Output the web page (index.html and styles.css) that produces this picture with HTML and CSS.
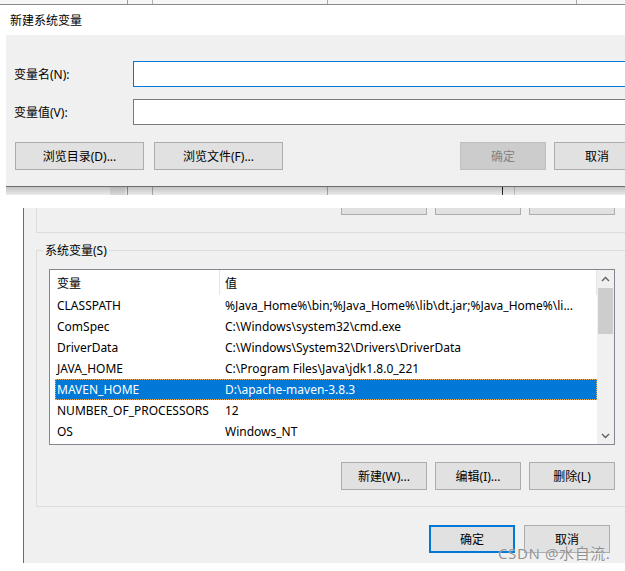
FILE: index.html
```html
<!DOCTYPE html>
<html lang="zh-CN">
<head>
<meta charset="utf-8">
<title>新建系统变量</title>
<link rel="stylesheet" href="styles.css">
</head>
<body>
<div class="page">
  <div class="bg-top"></div>
  <div class="dialog">
    <div class="titlebar">新建系统变量</div>
    <div class="dlg-body">
      <div class="field">
        <label class="field-label">变量名(N):</label>
        <div class="input input-focused"></div>
      </div>
      <div class="field">
        <label class="field-label">变量值(V):</label>
        <div class="input"></div>
      </div>
      <div class="dlg-buttons">
        <button class="btn btn-wide">浏览目录(D)...</button>
        <button class="btn btn-wide">浏览文件(F)...</button>
        <div class="spacer"></div>
        <button class="btn btn-disabled">确定</button>
        <button class="btn">取消</button>
      </div>
    </div>
  </div>
  <div class="shadow-strip"></div>
  <div class="gap-white"></div>
  <div class="win">
    <div class="group-top">
      <div class="stub-row">
        <div class="btn-stub"></div>
        <div class="btn-stub"></div>
        <div class="btn-stub"></div>
      </div>
    </div>
    <fieldset class="group-sys">
      <legend class="legend">系统变量(S)</legend>
      <div class="list">
        <div class="list-main">
          <div class="list-header">
            <div class="hcol1">变量</div>
            <div class="hcol2">值</div>
          </div>
          <div class="row"><div class="c1">CLASSPATH</div><div class="c2">%Java_Home%\bin;%Java_Home%\lib\dt.jar;%Java_Home%\li...</div></div>
          <div class="row"><div class="c1">ComSpec</div><div class="c2">C:\Windows\system32\cmd.exe</div></div>
          <div class="row"><div class="c1">DriverData</div><div class="c2">C:\Windows\System32\Drivers\DriverData</div></div>
          <div class="row"><div class="c1">JAVA_HOME</div><div class="c2">C:\Program Files\Java\jdk1.8.0_221</div></div>
          <div class="row row-selected"><div class="c1">MAVEN_HOME</div><div class="c2">D:\apache-maven-3.8.3</div></div>
          <div class="row"><div class="c1">NUMBER_OF_PROCESSORS</div><div class="c2">12</div></div>
          <div class="row"><div class="c1">OS</div><div class="c2">Windows_NT</div></div>
        </div>
        <div class="scrollbar">
          <div class="sb-arrow">
            <svg width="9" height="6" viewBox="0 0 9 6"><polyline points="1,5 4.5,1.5 8,5" fill="none" stroke="#606060" stroke-width="1.4"/></svg>
          </div>
          <div class="sb-thumb"></div>
          <div class="sb-track"></div>
          <div class="sb-arrow">
            <svg width="9" height="6" viewBox="0 0 9 6"><polyline points="1,1 4.5,4.5 8,1" fill="none" stroke="#606060" stroke-width="1.4"/></svg>
          </div>
        </div>
      </div>
      <div class="btn-row">
        <button class="btn">新建(W)...</button>
        <button class="btn">编辑(I)...</button>
        <button class="btn">删除(L)</button>
      </div>
    </fieldset>
    <div class="ok-row">
      <button class="btn btn-default">确定</button>
      <button class="btn">取消</button>
    </div>
  </div>
  <div class="watermark">CSDN @水自流.</div>
</div>
</body>
</html>
```
FILE: styles.css
```css
* { box-sizing: border-box; }
html, body { margin: 0; padding: 0; background: #fff; }
body {
  font-family: "Noto Sans", "Noto Sans CJK SC", sans-serif;
  font-size: 12px;
  color: #000;
}
.page {
  position: relative;
  width: 625px;
  height: 571px;
  overflow: hidden;
  background: #fff;
}
.bg-top {
  height: 4px;
  width: 660px;
  background:
    linear-gradient(#9c9c9c, #9c9c9c) 127px 0 / 1px 100% no-repeat,
    linear-gradient(#b0b0b0, #b0b0b0) 152px 0 / 1px 100% no-repeat,
    linear-gradient(#a8a8a8, #a8a8a8) 327px 0 / 1px 100% no-repeat,
    linear-gradient(#a8a8a8, #a8a8a8) 576px 0 / 1px 100% no-repeat,
    #f6f6f6;
}
.dialog {
  width: 660px;
  border-top: 1px solid #8a8a8a;
}
.titlebar {
  height: 30px;
  display: flex;
  align-items: center;
  padding-left: 10px;
  padding-bottom: 1px;
  background: #fff;
}
.dlg-body {
  margin-left: 6px;
  width: 642px;
  height: 152px;
  background: #f0f0f0;
  border-bottom: 1px solid #6e6e6e;
  padding: 26px 8px 0 8px;
}
.field {
  display: flex;
  align-items: center;
  height: 26px;
}
.field + .field { margin-top: 12px; }
.field-label {
  width: 119px;
  flex: none;
}
.input {
  flex: 1;
  height: 26px;
  background: #fff;
  border: 1px solid #7a7a7a;
}
.input-focused { border-color: #0078d7; }
.dlg-buttons {
  display: flex;
  margin-top: 17px;
  padding-left: 1px;
}
.spacer { flex: 1; }
.btn {
  font: inherit;
  color: #000;
  width: 86px;
  height: 28px;
  padding: 0;
  margin: 0;
  background: #e1e1e1;
  border: 1px solid #adadad;
  border-radius: 0;
  display: flex;
  align-items: center;
  justify-content: center;
}
.btn-wide { width: 129px; }
.btn-wide + .btn-wide { margin-left: 10px; }
.btn-disabled {
  background: #cccccc;
  border-color: #bfbfbf;
  color: #838383;
  margin-right: 8px;
}
.shadow-strip {
  margin-left: 6px;
  height: 8px;
  width: 660px;
  background:
    linear-gradient(#b4b4b4, #dadada) 104px 0 / 15px 100% no-repeat,
    linear-gradient(#6e6e6e, #9a9a9a) 121px 0 / 1px 100% no-repeat,
    linear-gradient(#8a8a8a, #aaaaaa) 146px 0 / 1px 100% no-repeat,
    linear-gradient(#8a8a8a, #aaaaaa) 321px 0 / 1px 100% no-repeat,
    linear-gradient(#111, #333) 496px 0 / 1px 100% no-repeat,
    linear-gradient(#a0a0a0, #c0c0c0) 508px 0 / 1px 100% no-repeat,
    linear-gradient(#c2c2c2, #ebebeb);
}
.gap-white { height: 13px; }
.win {
  margin-left: 23px;
  width: 617px;
  height: 355px;
  border-left: 1px solid #6b6b6b;
  background: #f0f0f0;
  padding: 0 12px;
}
.group-top {
  height: 25px;
  border: 1px solid #dcdcdc;
  border-top: none;
  padding: 0 12px;
}
.stub-row {
  display: flex;
  justify-content: flex-end;
  gap: 8px;
}
.btn-stub {
  width: 86px;
  height: 7px;
  background: #e1e1e1;
  border: 1px solid #adadad;
  border-top: none;
}
.group-sys {
  margin: 10px 0 0 0;
  padding: 0 12px 16px 12px;
  border: 1px solid #dcdcdc;
  min-width: 0;
}
.legend {
  padding: 0 2px;
  margin-left: -6px;
  line-height: 15px;
}
.list {
  margin-top: 11px;
  height: 176px;
  display: flex;
  border: 1px solid #828790;
  background: #fff;
}
.list-main {
  flex: 1;
  padding-left: 5px;
  overflow: hidden;
}
.list-header {
  display: flex;
  height: 25px;
}
.hcol1 {
  width: 165px;
  flex: none;
  padding-left: 2px;
  display: flex;
  align-items: center;
  border-right: 1px solid #e5e5e5;
}
.hcol2 {
  flex: 1;
  padding-left: 5px;
  display: flex;
  align-items: center;
  border-right: 1px solid #e5e5e5;
}
.row {
  display: flex;
  align-items: center;
  height: 21px;
  white-space: nowrap;
}
.c1 {
  width: 165px;
  flex: none;
  padding-left: 2px;
}
.c2 {
  flex: 1;
  padding-left: 5px;
  overflow: hidden;
}
.row-selected {
  background: #0078d7;
  color: #fff;
  outline: 1px dotted #e8b060;
  outline-offset: -1px;
}
.scrollbar {
  width: 17px;
  flex: none;
  background: #f0f0f0;
  display: flex;
  flex-direction: column;
}
.sb-arrow {
  height: 17px;
  flex: none;
  display: flex;
  align-items: center;
  justify-content: center;
}
.sb-thumb {
  height: 46px;
  margin: 1px 1px 0 1px;
  background: #cdcdcd;
  flex: none;
}
.sb-track { flex: 1; }
.btn-row {
  display: flex;
  justify-content: flex-end;
  gap: 8px;
  margin-top: 17px;
}
.ok-row {
  display: flex;
  justify-content: flex-end;
  gap: 9px;
  margin-top: 18px;
  padding-right: 18px;
}
.btn-default {
  border: 2px solid #0078d7;
}
.watermark {
  position: absolute;
  left: 498px;
  top: 543px;
  font-size: 15px;
  line-height: 20px;
  letter-spacing: 0.6px;
  color: rgba(110, 110, 110, 0.75);
  text-shadow: 0 0 1px #fff;
  white-space: nowrap;
}
```
